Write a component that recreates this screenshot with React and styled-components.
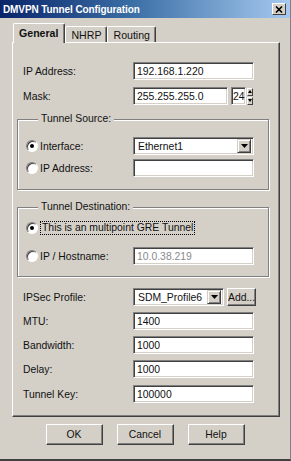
import React from 'react';
import styled, { createGlobalStyle } from 'styled-components';

const GlobalStyle = createGlobalStyle`
  html, body {
    margin: 0;
    padding: 0;
    background: #d4d0c8;
  }
  body {
    font-family: "Liberation Sans", Arial, sans-serif;
    font-size: 10.4px;
    color: #111;
  }
`;

const Window = styled.div`
  width: 291px;
  height: 461px;
  box-sizing: border-box;
  background: #d4d0c8;
  border-right: 1px solid #808080;
  border-bottom: 2px solid #404040;
  display: flex;
  flex-direction: column;
`;

const TitleBar = styled.div`
  height: 18px;
  display: flex;
  align-items: center;
  justify-content: space-between;
  padding: 0 3px 0 3px;
  background: linear-gradient(to right, #0a246a 0%, #3a6ea5 45%, #a6caf0 100%);
`;

const Title = styled.span`
  color: #fff;
  font-weight: bold;
  font-size: 10px;
  letter-spacing: -0.1px;
`;

const CloseButton = styled.div`
  width: 14px;
  height: 12px;
  box-sizing: border-box;
  background: #d4d0c8;
  border: 1px solid;
  border-color: #fff #404040 #404040 #fff;
  display: flex;
  align-items: center;
  justify-content: center;
  margin-right: 1px;
`;

const TabStrip = styled.div`
  display: flex;
  align-items: flex-end;
  height: 19px;
  margin: 5px 0 0 13px;
  position: relative;
  z-index: 1;
`;

const Tab = styled.div`
  height: ${(props) => (props.active ? '20px' : '16px')};
  box-sizing: border-box;
  padding: ${(props) => (props.active ? '3px 6px 0 5px' : '2px 5px 0 5px')};
  margin-bottom: ${(props) => (props.active ? '-1px' : '0')};
  background: #d4d0c8;
  border-top: 1px solid #fff;
  border-left: 1px solid #fff;
  border-right: 1px solid #404040;
  box-shadow: inset -1px 0 0 #808080;
  border-radius: 2px 2px 0 0;
  font-weight: ${(props) => (props.active ? 'bold' : 'normal')};
  font-size: 10.6px;
`;

const Panel = styled.div`
  margin-left: 12px;
  width: 268px;
  height: 375px;
  box-sizing: border-box;
  border: 1px solid;
  border-color: #fff #404040 #404040 #fff;
  box-shadow: inset -1px -1px 0 #808080;
  padding: 19px 10px 0 4px;
  display: flex;
  flex-direction: column;
`;

const Row = styled.div`
  display: flex;
  align-items: center;
  height: 18px;
  margin-left: ${(props) => (props.inGroup ? '0' : '6px')};
  margin-top: ${(props) => props.gap || 0}px;
`;

const Label = styled.span`
  width: 110px;
  flex: none;
`;

const Field = styled.div`
  width: ${(props) => props.width || 121}px;
  height: 18px;
  box-sizing: border-box;
  background: #fff;
  border: 1px solid;
  border-color: #808080 #fff #fff #808080;
  box-shadow: inset 1px 1px 0 #404040, inset -1px -1px 0 #d4d0c8;
  padding: 0 3px;
  display: flex;
  align-items: center;
  color: ${(props) => (props.disabled ? '#8a8a8a' : '#111')};
  flex: none;
`;

const Spin = styled.div`
  width: 6px;
  height: 17px;
  margin-left: 1px;
  display: flex;
  flex-direction: column;
  gap: 1px;
`;

const SpinHalf = styled.div`
  flex: 1;
  background: #d4d0c8;
  border: 1px solid;
  border-color: #fff #404040 #404040 #fff;
  display: flex;
  align-items: center;
  justify-content: center;
`;

const Select = styled.div`
  width: ${(props) => props.width || 121}px;
  height: 18px;
  box-sizing: border-box;
  background: #fff;
  border: 1px solid;
  border-color: #808080 #fff #fff #808080;
  box-shadow: inset 1px 1px 0 #404040, inset -1px -1px 0 #d4d0c8;
  display: flex;
  align-items: center;
  justify-content: space-between;
  padding: 2px 2px 2px 4px;
  flex: none;
`;

const DropButton = styled.div`
  width: 14px;
  height: 14px;
  box-sizing: border-box;
  background: #d4d0c8;
  border: 1px solid;
  border-color: #d4d0c8 #404040 #404040 #d4d0c8;
  box-shadow: inset 1px 1px 0 #fff, inset -1px -1px 0 #808080;
  display: flex;
  align-items: center;
  justify-content: center;
`;

const SmallButton = styled.button`
  width: 29px;
  height: 18px;
  margin-left: 3px;
  padding: 0;
  box-sizing: border-box;
  background: #d4d0c8;
  border: 1px solid;
  border-color: #fff #404040 #404040 #fff;
  box-shadow: inset -1px -1px 0 #808080;
  font-family: inherit;
  font-size: 10.4px;
  color: #111;
`;

const Group = styled.fieldset`
  margin: ${(props) => props.gap || 0}px 0 0 0;
  padding: ${(props) => props.padTop}px 0 ${(props) => props.padBottom}px 8px;
  border: 1px solid #808080;
  box-shadow: 1px 1px 0 #fff, inset 1px 1px 0 #fff;
  min-width: 0;
  display: flex;
  flex-direction: column;
`;

const Legend = styled.legend`
  margin-left: 12px;
  padding: 0 3px;
  line-height: 12px;
  background: #d4d0c8;
`;

const Option = styled.label`
  width: ${(props) => (props.wide ? 'auto' : '107px')};
  flex: none;
  display: flex;
  align-items: center;
  gap: 2px;
`;

const Radio = styled.span`
  width: 12px;
  height: 12px;
  box-sizing: border-box;
  border-radius: 50%;
  background: #fff;
  border: 1px solid;
  border-color: #808080 #fff #fff #808080;
  box-shadow: inset 1px 1px 0 #404040;
  display: flex;
  align-items: center;
  justify-content: center;
  flex: none;
  &::after {
    content: '';
    width: 4px;
    height: 4px;
    border-radius: 50%;
    background: ${(props) => (props.checked ? '#000' : 'transparent')};
  }
`;

const FocusText = styled.span`
  border: 1px dotted #000;
  padding: 0 1px;
  line-height: 12px;
`;

const ButtonBar = styled.div`
  display: flex;
  justify-content: center;
  gap: 14px;
  margin-top: 7px;
`;

const DialogButton = styled.button`
  width: 57px;
  height: 21px;
  box-sizing: border-box;
  padding: 0;
  background: #d4d0c8;
  border: 1px solid;
  border-color: #fff #404040 #404040 #fff;
  box-shadow: inset -1px -1px 0 #808080;
  font-family: inherit;
  font-size: 10.4px;
  color: #111;
`;

const DownArrow = () => (
  <svg width="7" height="4" viewBox="0 0 7 4">
    <path d="M0 0h7L3.5 4z" fill="#000" />
  </svg>
);

const TinyArrow = ({ up }) => (
  <svg width="4" height="3" viewBox="0 0 4 3">
    <path d={up ? 'M0 3h4L2 0z' : 'M0 0h4L2 3z'} fill="#000" />
  </svg>
);

const TextRow = ({ label, value, gap }) => (
  <Row gap={gap}>
    <Label>{label}</Label>
    <Field>{value}</Field>
  </Row>
);

const App = () => {
  return (
    <Window>
      <GlobalStyle />
      <TitleBar>
        <Title>DMVPN Tunnel Configuration</Title>
        <CloseButton>
          <svg width="8" height="7" viewBox="0 0 8 7">
            <path d="M1 0.5l6 6M7 0.5l-6 6" stroke="#000" strokeWidth="1.6" />
          </svg>
        </CloseButton>
      </TitleBar>

      <TabStrip>
        <Tab active>General</Tab>
        <Tab>NHRP</Tab>
        <Tab>Routing</Tab>
      </TabStrip>

      <Panel>
        <TextRow label="IP Address:" value="192.168.1.220" />
        <Row gap={7}>
          <Label>Mask:</Label>
          <Field width={95}>255.255.255.0</Field>
          <Field width={15} style={{ marginLeft: 3, padding: '0 1px' }}>24</Field>
          <Spin>
            <SpinHalf><TinyArrow up /></SpinHalf>
            <SpinHalf><TinyArrow /></SpinHalf>
          </Spin>
        </Row>

        <Group gap={8} padTop={12} padBottom={12}>
          <Legend>Tunnel Source:</Legend>
          <Row inGroup>
            <Option><Radio checked />Interface:</Option>
            <Select>
              <span>Ethernet1</span>
              <DropButton><DownArrow /></DropButton>
            </Select>
          </Row>
          <Row inGroup gap={4}>
            <Option><Radio />IP Address:</Option>
            <Field />
          </Row>
        </Group>

        <Group gap={11} padTop={6} padBottom={11}>
          <Legend>Tunnel Destination:</Legend>
          <Row inGroup>
            <Option wide>
              <Radio checked />
              <FocusText>This is an multipoint GRE Tunnel</FocusText>
            </Option>
          </Row>
          <Row inGroup gap={10}>
            <Option><Radio />IP / Hostname:</Option>
            <Field disabled>10.0.38.219</Field>
          </Row>
        </Group>

        <Row gap={11}>
          <Label>IPSec Profile:</Label>
          <Select width={91}>
            <span>SDM_Profile6</span>
            <DropButton><DownArrow /></DropButton>
          </Select>
          <SmallButton>Add...</SmallButton>
        </Row>
        <TextRow label="MTU:" value="1400" gap={6} />
        <TextRow label="Bandwidth:" value="1000" gap={6} />
        <TextRow label="Delay:" value="1000" gap={6} />
        <TextRow label="Tunnel Key:" value="100000" gap={7} />
      </Panel>

      <ButtonBar>
        <DialogButton>OK</DialogButton>
        <DialogButton>Cancel</DialogButton>
        <DialogButton>Help</DialogButton>
      </ButtonBar>
    </Window>
  );
};

export default App;
